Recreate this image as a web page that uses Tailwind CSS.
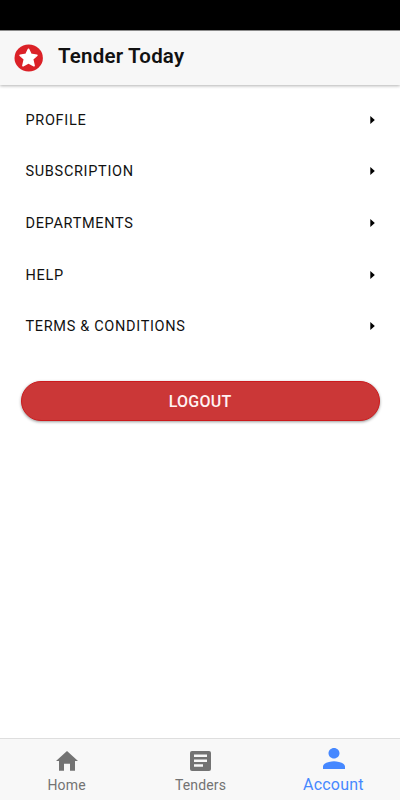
<!DOCTYPE html>
<html lang="en">
<head>
<meta charset="utf-8">
<meta name="viewport" content="width=device-width, initial-scale=1">
<title>Tender Today</title>
<script src="https://cdn.jsdelivr.net/npm/@tailwindcss/browser@4"></script>
</head>
<body class="flex h-[800px] w-[400px] flex-col overflow-hidden bg-white font-[Roboto,sans-serif] text-black">
  <div class="h-[30px] shrink-0 bg-black"></div>
  <header class="flex h-[55px] shrink-0 items-center border-t border-[#8a8a8a] bg-[#f7f7f7] pl-[14px] shadow-[0_1px_3px_rgba(0,0,0,0.3)]">
    <svg class="h-7 w-[29px]" viewBox="0 0 29 28" preserveAspectRatio="none">
      <ellipse cx="14.7" cy="14" rx="14.2" ry="13.5" fill="#db2127"/>
      <path d="M14.500 5.400 16.900 10.500 22.800 11.300 18.500 15.200 20 21.600 14.500 18.700 9 21.600 10.500 15.200 6.200 11.300 12.100 10.500Z" fill="#fff" stroke="#fff" stroke-width="1.800" stroke-linejoin="round"/>
    </svg>
    <h1 class="-mt-[4px] ml-[15px] text-[20.5px] leading-6 font-semibold tracking-[0.2px] text-[#111]">Tender Today</h1>
  </header>
  <main class="flex-1">
    <nav class="pt-[9px] text-[14.5px] tracking-[0.68px] text-[#111]">
      <a class="flex h-[51.6px] items-center justify-between pr-[25px] pl-[25.5px]"><span class="pt-[2px]">PROFILE</span><svg class="h-2 w-[5px]" viewBox="0 0 5 8"><path d="M.3 0 4.8 4 .3 8Z"/></svg></a>
      <a class="flex h-[51.6px] items-center justify-between pr-[25px] pl-[25.5px]"><span class="pt-px">SUBSCRIPTION</span><svg class="h-2 w-[5px]" viewBox="0 0 5 8"><path d="M.3 0 4.8 4 .3 8Z"/></svg></a>
      <a class="flex h-[51.6px] items-center justify-between pr-[25px] pl-[25.5px]"><span class="pt-[2px]">DEPARTMENTS</span><svg class="h-2 w-[5px]" viewBox="0 0 5 8"><path d="M.3 0 4.8 4 .3 8Z"/></svg></a>
      <a class="flex h-[51.6px] items-center justify-between pr-[25px] pl-[25.5px]"><span class="pt-[2px]">HELP</span><svg class="h-2 w-[5px]" viewBox="0 0 5 8"><path d="M.3 0 4.8 4 .3 8Z"/></svg></a>
      <a class="flex h-[51.6px] items-center justify-between pr-[25px] pl-[25.5px]"><span class="pt-[2px]">TERMS &amp; CONDITIONS</span><svg class="h-2 w-[5px]" viewBox="0 0 5 8"><path d="M.3 0 4.8 4 .3 8Z"/></svg></a>
    </nav>
    <button class="mt-[29.500px] ml-[20.6px] flex h-10 w-[359px] items-center justify-center rounded-full border border-[#cc1a1d] bg-[#cb3737] pt-px text-[16px] font-medium tracking-[0.250px] text-[#fff2f2] shadow-[0_1px_3px_rgba(0,0,0,0.4)]">LOGOUT</button>
  </main>
  <footer class="grid h-[62px] shrink-0 grid-cols-3 border-t border-[#dedede] bg-[#f8f8f8] text-[14px] text-[#737373]">
    <a class="flex flex-col items-center pt-[12px]">
      <svg class="h-5 w-[22px]" viewBox="0 0 22 20" fill="currentColor"><path d="M11 0 22 10H19V19.700H14V12.700H8V19.700H3V10H0Z"/></svg>
      <span class="mt-[4px] leading-5 tracking-[0.2px]">Home</span>
    </a>
    <a class="flex flex-col items-center pt-[12px]">
      <svg class="ml-px h-5 w-[21px]" viewBox="0 0 21 20"><rect width="21" height="20" rx="2" fill="currentColor"/><path d="M4 3.500h13v2.500H4zM4 8.500h13v2.500H4zM4 13.200h9v2.500H4z" fill="#f8f8f8"/></svg>
      <span class="mt-[4px] ml-px leading-5 tracking-[0.15px]">Tenders</span>
    </a>
    <a class="flex flex-col items-center pt-[9px] text-[#4688ff]">
      <svg class="ml-px h-[21px] w-[22px]" viewBox="4 4 16 16" preserveAspectRatio="none" fill="currentColor"><path d="M12 12c2.210 0 4-1.790 4-4s-1.790-4-4-4-4 1.790-4 4 1.790 4 4 4zm0 2c-2.670 0-8 1.340-8 4v2h16v-2c0-2.660-5.330-4-8-4z"/></svg>
      <span class="mt-[6px] text-[16px] leading-5 tracking-[0.2px]">Account</span>
    </a>
  </footer>
</body>
</html>
